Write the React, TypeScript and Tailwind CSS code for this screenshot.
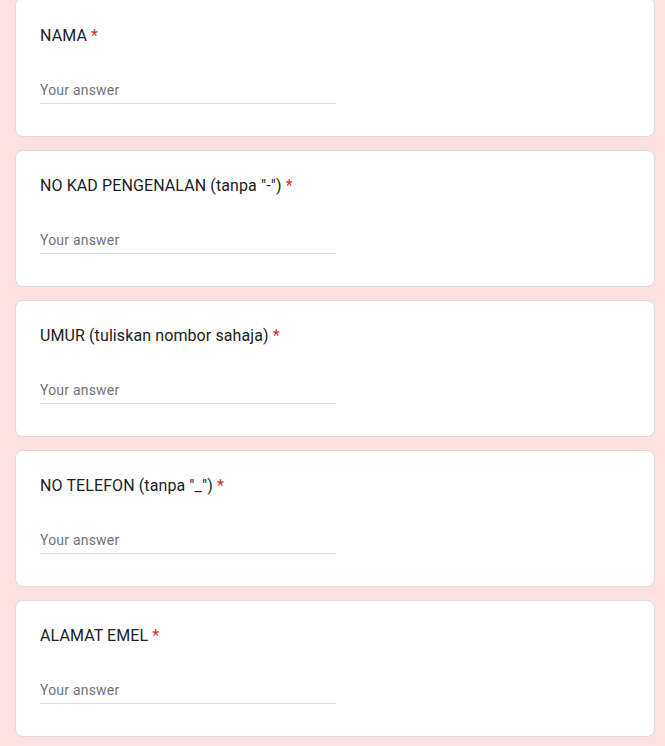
import React from "react";

const questions = [
  "NAMA",
  'NO KAD PENGENALAN (tanpa "-")',
  "UMUR (tuliskan nombor sahaja)",
  'NO TELEFON (tanpa "_")',
  "ALAMAT EMEL",
];

export default function App() {
  return (
    <div
      className="min-h-[746px] w-full bg-[#fde0e0] overflow-hidden"
      style={{ fontFamily: "Roboto, 'Liberation Sans', Arial, sans-serif" }}
    >
      <div className="flex flex-col gap-[13px] pl-[15px]">
        {questions.map((q, i) => (
          <div
            key={q}
            className={
              i === 0
                ? "w-[640px] h-[140px] -mt-[3px] bg-white border border-[#dadce0] rounded-lg px-6 pt-[26px]"
                : "w-[640px] h-[137px] bg-white border border-[#dadce0] rounded-lg px-6 pt-[23px]"
            }
          >
            <div className="text-[16px] leading-6 text-[#202124] tracking-[0.1px]">
              {q} <span className="text-[#d93025]">*</span>
            </div>
            <div className="mt-[32px] w-[296px] border-b border-[#dadce0] pb-[3px]">
              <div className="text-[14px] leading-5 text-[#70757a] tracking-[0.2px]">
                Your answer
              </div>
            </div>
          </div>
        ))}
      </div>
    </div>
  );
}
